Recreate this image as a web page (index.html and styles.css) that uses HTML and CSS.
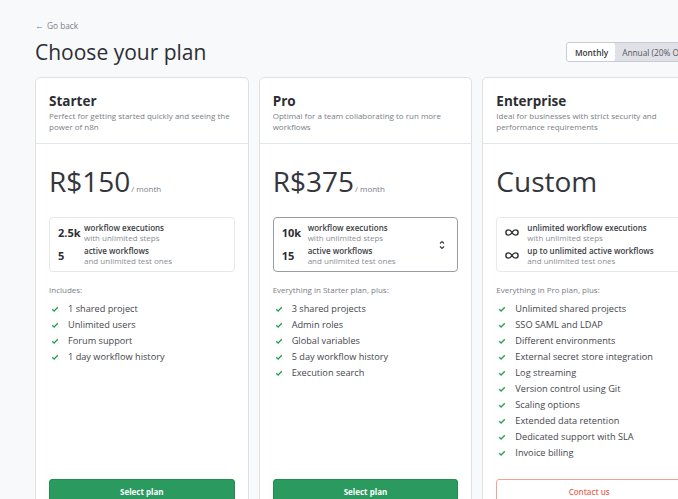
FILE: index.html
```html
<!DOCTYPE html>
<html>
<head>
<meta charset="utf-8">
<link rel="stylesheet" href="styles.css">
</head>
<body>
<div class="page">
  <a class="back"><span class="arrow">&#8592;</span> Go back</a>
  <div class="top">
    <h1 class="title">Choose your plan</h1>
    <div class="toggle">
      <span class="opt active">Monthly</span>
      <span class="opt">Annual (20% Off)</span>
    </div>
  </div>
  <div class="cards">
    <div class="card">
      <div class="head">
        <div class="name">Starter</div>
        <div class="desc">Perfect for getting started quickly and seeing the power of n8n</div>
      </div>
      <div class="body">
        <div class="price">R$150<span class="per">/ month</span></div>
        <div class="quota">
          <div class="qrow"><span class="num">2.5k</span><div class="qtext"><b>workflow executions</b><span>with unlimited steps</span></div></div>
          <div class="qrow"><span class="num">5</span><div class="qtext"><b>active workflows</b><span>and unlimited test ones</span></div></div>
        </div>
        <div class="incl">Includes:</div>
        <ul class="features">
          <li><svg class="check" viewBox="0 0 10 10"><path d="M1.5 5.3 L3.9 7.5 L8.5 2.8"/></svg>1 shared project</li>
          <li><svg class="check" viewBox="0 0 10 10"><path d="M1.5 5.3 L3.9 7.5 L8.5 2.8"/></svg>Unlimited users</li>
          <li><svg class="check" viewBox="0 0 10 10"><path d="M1.5 5.3 L3.9 7.5 L8.5 2.8"/></svg>Forum support</li>
          <li><svg class="check" viewBox="0 0 10 10"><path d="M1.5 5.3 L3.9 7.5 L8.5 2.8"/></svg>1 day workflow history</li>
        </ul>
        <button class="btn">Select plan</button>
      </div>
    </div>
    <div class="card">
      <div class="head">
        <div class="name">Pro</div>
        <div class="desc">Optimal for a team collaborating to run more workflows</div>
      </div>
      <div class="body">
        <div class="price">R$375<span class="per">/ month</span></div>
        <div class="quota select">
          <div class="qrow"><span class="num">10k</span><div class="qtext"><b>workflow executions</b><span>with unlimited steps</span></div></div>
          <div class="qrow"><span class="num">15</span><div class="qtext"><b>active workflows</b><span>and unlimited test ones</span></div></div>
          <svg class="chev" viewBox="0 0 8 12"><path d="M2 4.5 L4 2.5 L6 4.5 M2 7.5 L4 9.5 L6 7.5"/></svg>
        </div>
        <div class="incl">Everything in Starter plan, plus:</div>
        <ul class="features">
          <li><svg class="check" viewBox="0 0 10 10"><path d="M1.5 5.3 L3.9 7.5 L8.5 2.8"/></svg>3 shared projects</li>
          <li><svg class="check" viewBox="0 0 10 10"><path d="M1.5 5.3 L3.9 7.5 L8.5 2.8"/></svg>Admin roles</li>
          <li><svg class="check" viewBox="0 0 10 10"><path d="M1.5 5.3 L3.9 7.5 L8.5 2.8"/></svg>Global variables</li>
          <li><svg class="check" viewBox="0 0 10 10"><path d="M1.5 5.3 L3.9 7.5 L8.5 2.8"/></svg>5 day workflow history</li>
          <li><svg class="check" viewBox="0 0 10 10"><path d="M1.5 5.3 L3.9 7.5 L8.5 2.8"/></svg>Execution search</li>
        </ul>
        <button class="btn">Select plan</button>
      </div>
    </div>
    <div class="card">
      <div class="head">
        <div class="name">Enterprise</div>
        <div class="desc">Ideal for businesses with strict security and performance requirements</div>
      </div>
      <div class="body">
        <div class="price">Custom</div>
        <div class="quota">
          <div class="qrow"><svg class="inf" viewBox="0 0 16 8"><path d="M8 4 C6.5 1.5 5.5 1 4 1 C2.3 1 1 2.3 1 4 C1 5.7 2.3 7 4 7 C5.5 7 6.5 6.5 8 4 C9.5 1.5 10.5 1 12 1 C13.7 1 15 2.3 15 4 C15 5.7 13.7 7 12 7 C10.5 7 9.5 6.5 8 4 Z"/></svg><div class="qtext"><b>unlimited workflow executions</b><span>with unlimited steps</span></div></div>
          <div class="qrow"><svg class="inf" viewBox="0 0 16 8"><path d="M8 4 C6.5 1.5 5.5 1 4 1 C2.3 1 1 2.3 1 4 C1 5.7 2.3 7 4 7 C5.5 7 6.5 6.5 8 4 C9.5 1.5 10.5 1 12 1 C13.7 1 15 2.3 15 4 C15 5.7 13.7 7 12 7 C10.5 7 9.5 6.5 8 4 Z"/></svg><div class="qtext"><b>up to unlimited active workflows</b><span>and unlimited test ones</span></div></div>
        </div>
        <div class="incl">Everything in Pro plan, plus:</div>
        <ul class="features">
          <li><svg class="check" viewBox="0 0 10 10"><path d="M1.5 5.3 L3.9 7.5 L8.5 2.8"/></svg>Unlimited shared projects</li>
          <li><svg class="check" viewBox="0 0 10 10"><path d="M1.5 5.3 L3.9 7.5 L8.5 2.8"/></svg>SSO SAML and LDAP</li>
          <li><svg class="check" viewBox="0 0 10 10"><path d="M1.5 5.3 L3.9 7.5 L8.5 2.8"/></svg>Different environments</li>
          <li><svg class="check" viewBox="0 0 10 10"><path d="M1.5 5.3 L3.9 7.5 L8.5 2.8"/></svg>External secret store integration</li>
          <li><svg class="check" viewBox="0 0 10 10"><path d="M1.5 5.3 L3.9 7.5 L8.5 2.8"/></svg>Log streaming</li>
          <li><svg class="check" viewBox="0 0 10 10"><path d="M1.5 5.3 L3.9 7.5 L8.5 2.8"/></svg>Version control using Git</li>
          <li><svg class="check" viewBox="0 0 10 10"><path d="M1.5 5.3 L3.9 7.5 L8.5 2.8"/></svg>Scaling options</li>
          <li><svg class="check" viewBox="0 0 10 10"><path d="M1.5 5.3 L3.9 7.5 L8.5 2.8"/></svg>Extended data retention</li>
          <li><svg class="check" viewBox="0 0 10 10"><path d="M1.5 5.3 L3.9 7.5 L8.5 2.8"/></svg>Dedicated support with SLA</li>
          <li><svg class="check" viewBox="0 0 10 10"><path d="M1.5 5.3 L3.9 7.5 L8.5 2.8"/></svg>Invoice billing</li>
        </ul>
        <button class="btn outline">Contact us</button>
      </div>
    </div>
  </div>
</div>
</body>
</html>
```
FILE: styles.css
```css
html, body {
  margin: 0;
  padding: 0;
  overflow: hidden;
  background: #f8f9fb;
  font-family: "Open Sans", "Liberation Sans", sans-serif;
  color: #2d2e33;
}
.page {
  width: 661px;
  padding: 20px 0 0 35px;
}
.back {
  display: flex;
  align-items: center;
  gap: 3px;
  font-size: 8.3px;
  line-height: 12px;
  color: #7a7d86;
}
.arrow {
  font-size: 9px;
}
.top {
  display: flex;
  align-items: center;
  justify-content: space-between;
  margin-top: 4px;
}
.title {
  margin: 0;
  font-size: 21px;
  font-weight: 400;
  line-height: 32px;
  color: #2d2e33;
}
.toggle {
  display: flex;
  background: #dfe1e7;
  border: 1px solid #c9ccd4;
  border-radius: 3px;
  height: 18px;
}
.opt {
  display: flex;
  align-items: center;
  padding: 0 8px 0 7px;
  font-size: 8.3px;
  white-space: nowrap;
  color: #55575f;
}
.opt.active {
  background: #fff;
  border-radius: 2px;
  padding: 0 7px 0 8px;
  font-weight: 600;
  color: #35373d;
}
.cards {
  display: grid;
  grid-template-columns: repeat(3, 1fr);
  gap: 10px;
  margin-top: 9px;
}
.card {
  background: #fff;
  border: 1px solid #dde0e7;
  border-radius: 5px;
  display: flex;
  flex-direction: column;
}
.head {
  padding: 13px 13px 11px;
  border-bottom: 1px solid #e2e5eb;
}
.name {
  font-size: 13.5px;
  font-weight: 700;
  line-height: 20px;
  color: #2d2e33;
}
.desc {
  font-size: 8px;
  line-height: 11px;
  color: #7a7d86;
  margin-top: -1px;
}
.body {
  padding: 18px 13px 0;
  display: flex;
  flex-direction: column;
  flex: 1;
}
.price {
  display: flex;
  align-items: baseline;
  height: 38px;
  font-size: 28px;
  font-weight: 500;
  line-height: 38px;
  color: #34363c;
}
.per {
  font-size: 8px;
  font-weight: 400;
  color: #7a7d86;
  margin-left: 1px;
}
.quota {
  margin-top: 17px;
  border: 1px solid #e6e8ed;
  border-radius: 4px;
  padding: 5px 8px 6px;
  display: flex;
  flex-direction: column;
  gap: 4px;
  position: relative;
}
.quota.select {
  border-color: #9a9ca3;
}
.qrow {
  display: flex;
  align-items: center;
}
.num {
  width: 26px;
  font-size: 11px;
  font-weight: 700;
  color: #2d2e33;
}
.qtext {
  display: flex;
  flex-direction: column;
  font-size: 8px;
  line-height: 9.5px;
}
.qtext b {
  font-weight: 600;
  color: #3b3d44;
}
.qtext span {
  color: #8a8d95;
}
.inf {
  width: 14px;
  height: 7px;
  margin: 0 8px 0 0;
  fill: none;
  stroke: #2d2e33;
  stroke-width: 1.6;
}
.chev {
  position: absolute;
  right: 11px;
  top: 50%;
  width: 8px;
  height: 12px;
  margin-top: -6px;
  fill: none;
  stroke: #3b3d44;
  stroke-width: 1.2;
}
.incl {
  margin-top: 12px;
  font-size: 8px;
  line-height: 12px;
  color: #7a7d86;
}
.features {
  list-style: none;
  margin: 5px 0 0;
  padding: 0;
  flex: 1;
}
.features li {
  display: flex;
  align-items: center;
  font-size: 9.2px;
  line-height: 16px;
  color: #44464d;
}
.check {
  width: 8px;
  height: 8px;
  margin: 0 9px 0 2px;
  fill: none;
  stroke: #2a9d5c;
  stroke-width: 1.7;
}
.btn {
  margin-top: 18px;
  height: 24px;
  border: 1px solid #238c53;
  border-radius: 3px;
  background: #2a9a5f;
  color: #fff;
  font-family: inherit;
  font-size: 8px;
  font-weight: 700;
}
.btn.outline {
  background: #fff;
  border-color: #f6a292;
  color: #ee6a55;
  font-weight: 600;
}
```
